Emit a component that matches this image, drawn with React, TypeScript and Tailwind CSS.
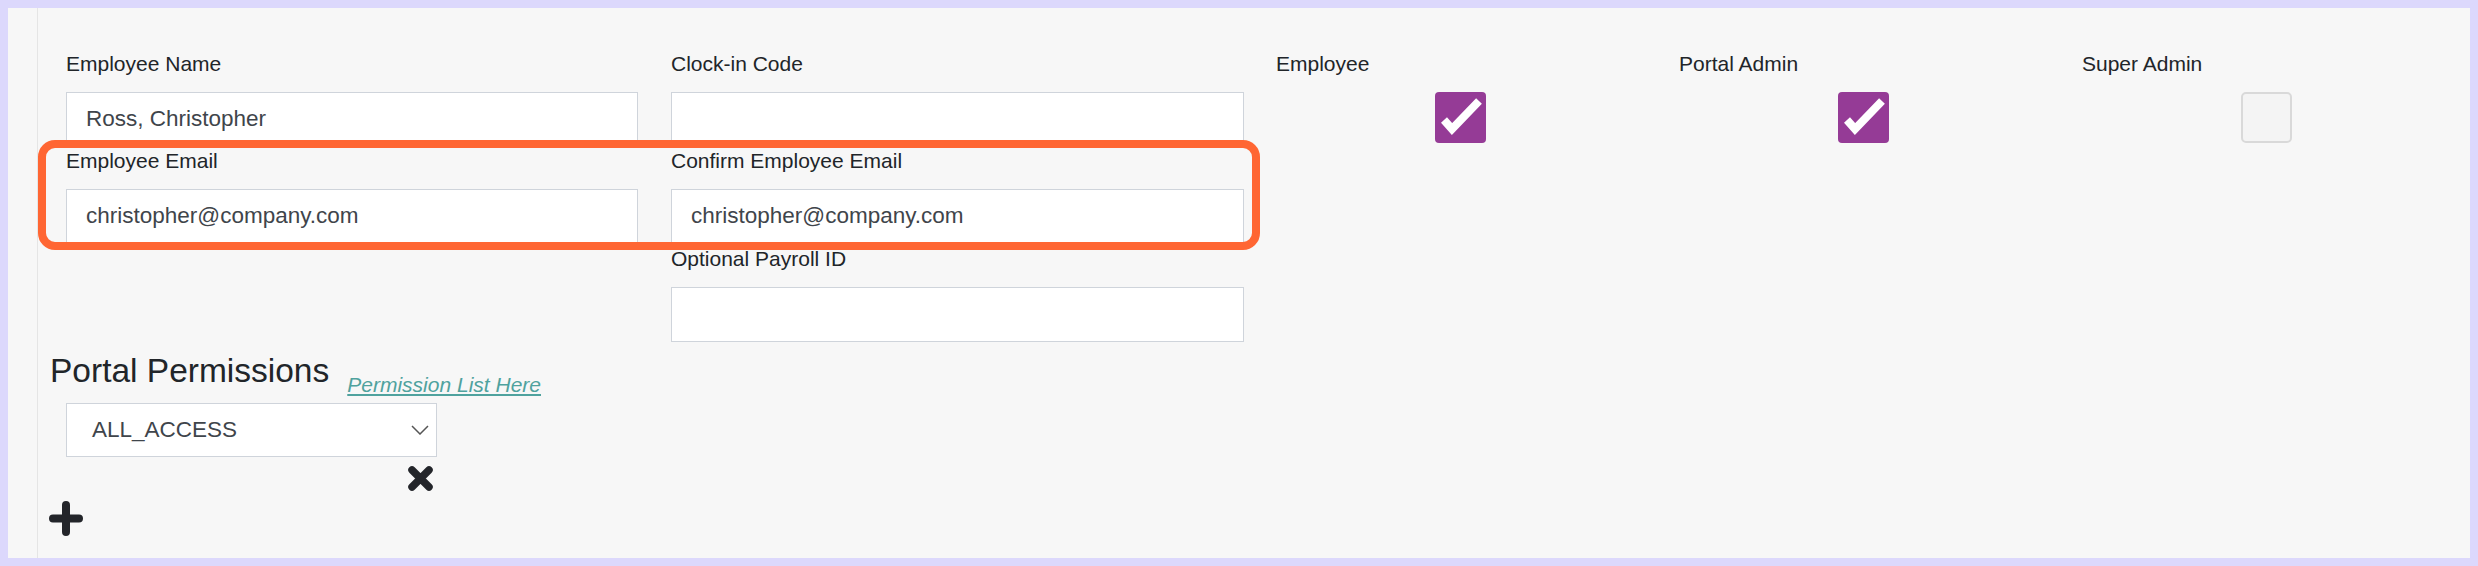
import React from "react";

function Field({ label, value, className = "" }: { label: string; value?: string; className?: string }) {
  return (
    <div className={className}>
      <label className="block text-[21px] leading-[23px] text-[#212529] mb-[17px]">{label}</label>
      <input
        readOnly
        defaultValue={value ?? ""}
        className="block w-full h-[55px] bg-white border border-[#cfd4db] pl-[19px] text-[22.5px] text-[#3f454b] outline-none"
      />
    </div>
  );
}

function RoleBox({ label, checked }: { label: string; checked: boolean }) {
  return (
    <div className="w-[403px] shrink-0">
      <div className="text-[21px] leading-[23px] text-[#212529] mb-[17px]">{label}</div>
      {checked ? (
        <div className="ml-[159px] w-[51px] h-[51px] rounded-[4px] bg-[#953b96] flex items-center justify-center">
          <svg width="51" height="51" viewBox="0 0 51 51">
            <path d="M9 28 L17 37 L44 9" fill="none" stroke="white" strokeWidth="8" strokeLinejoin="miter" />
          </svg>
        </div>
      ) : (
        <div className="ml-[159px] w-[51px] h-[51px] rounded-[5px] bg-[#f4f4f4] border-2 border-[#d9d9d9]" />
      )}
    </div>
  );
}

export default function App() {
  return (
    <div className="relative w-[2478px] h-[566px] bg-[#dcd8fc] p-[8px] font-['Liberation_Sans',Arial,sans-serif]">
      <div className="flex h-[550px] bg-[#f7f7f7]">
        <div className="w-[29px] shrink-0" />
        <div className="flex-1 border-l border-[#e5e5e5] pt-[43.5px]">
          <div className="flex pl-[28px]">
            <div className="w-[572px] shrink-0">
              <Field label="Employee Name" value="Ross, Christopher" />
              <Field label="Employee Email" value="christopher@company.com" className="mt-[2px]" />
            </div>
            <div className="w-[573px] ml-[33px] shrink-0">
              <Field label="Clock-in Code" />
              <Field label="Confirm Employee Email" value="christopher@company.com" className="mt-[2px]" />
              <Field label="Optional Payroll ID" className="mt-[3px]" />
            </div>
            <div className="flex ml-[32px]">
              <RoleBox label="Employee" checked />
              <RoleBox label="Portal Admin" checked />
              <RoleBox label="Super Admin" checked={false} />
            </div>
          </div>

          <div className="pl-[12px] mt-[10.5px]">
            <div className="flex items-start">
              <h2 className="text-[33.5px] leading-[37px] text-[#212529]">Portal Permissions</h2>
              <a className="ml-[18px] mt-[21px] text-[21px] leading-[23px] italic underline text-[#4fa29e]">
                Permission List Here
              </a>
            </div>
            <div className="mt-[7px] ml-[16px] w-[371px] h-[54px] bg-white border border-[#cfd4db] flex items-center justify-between pl-[25px] pr-[7px]">
              <span className="text-[22.5px] text-[#3f454b]">ALL_ACCESS</span>
              <svg width="18" height="10" viewBox="0 0 18 10">
                <path d="M1 1 L9 9 L17 1" fill="none" stroke="#555" strokeWidth="1.5" />
              </svg>
            </div>
            <div className="mt-[8px] ml-[357px] w-[27px] h-[27px]">
              <svg width="27" height="27" viewBox="0 0 27 27">
                <path d="M5 5 L22 22 M22 5 L5 22" stroke="#23252a" strokeWidth="7.5" strokeLinecap="round" />
              </svg>
            </div>
            <div className="mt-[9px] ml-[-1px] w-[34px] h-[35px]">
              <svg width="34" height="35" viewBox="0 0 34 35">
                <path d="M17 4 L17 31 M4 17.5 L30 17.5" stroke="#23252a" strokeWidth="8" strokeLinecap="round" />
              </svg>
            </div>
          </div>
        </div>
      </div>

      <div className="absolute left-[38px] top-[140px] w-[1222px] h-[110px] border-[8px] border-[#ff6633] rounded-[17px] pointer-events-none" />
    </div>
  );
}
